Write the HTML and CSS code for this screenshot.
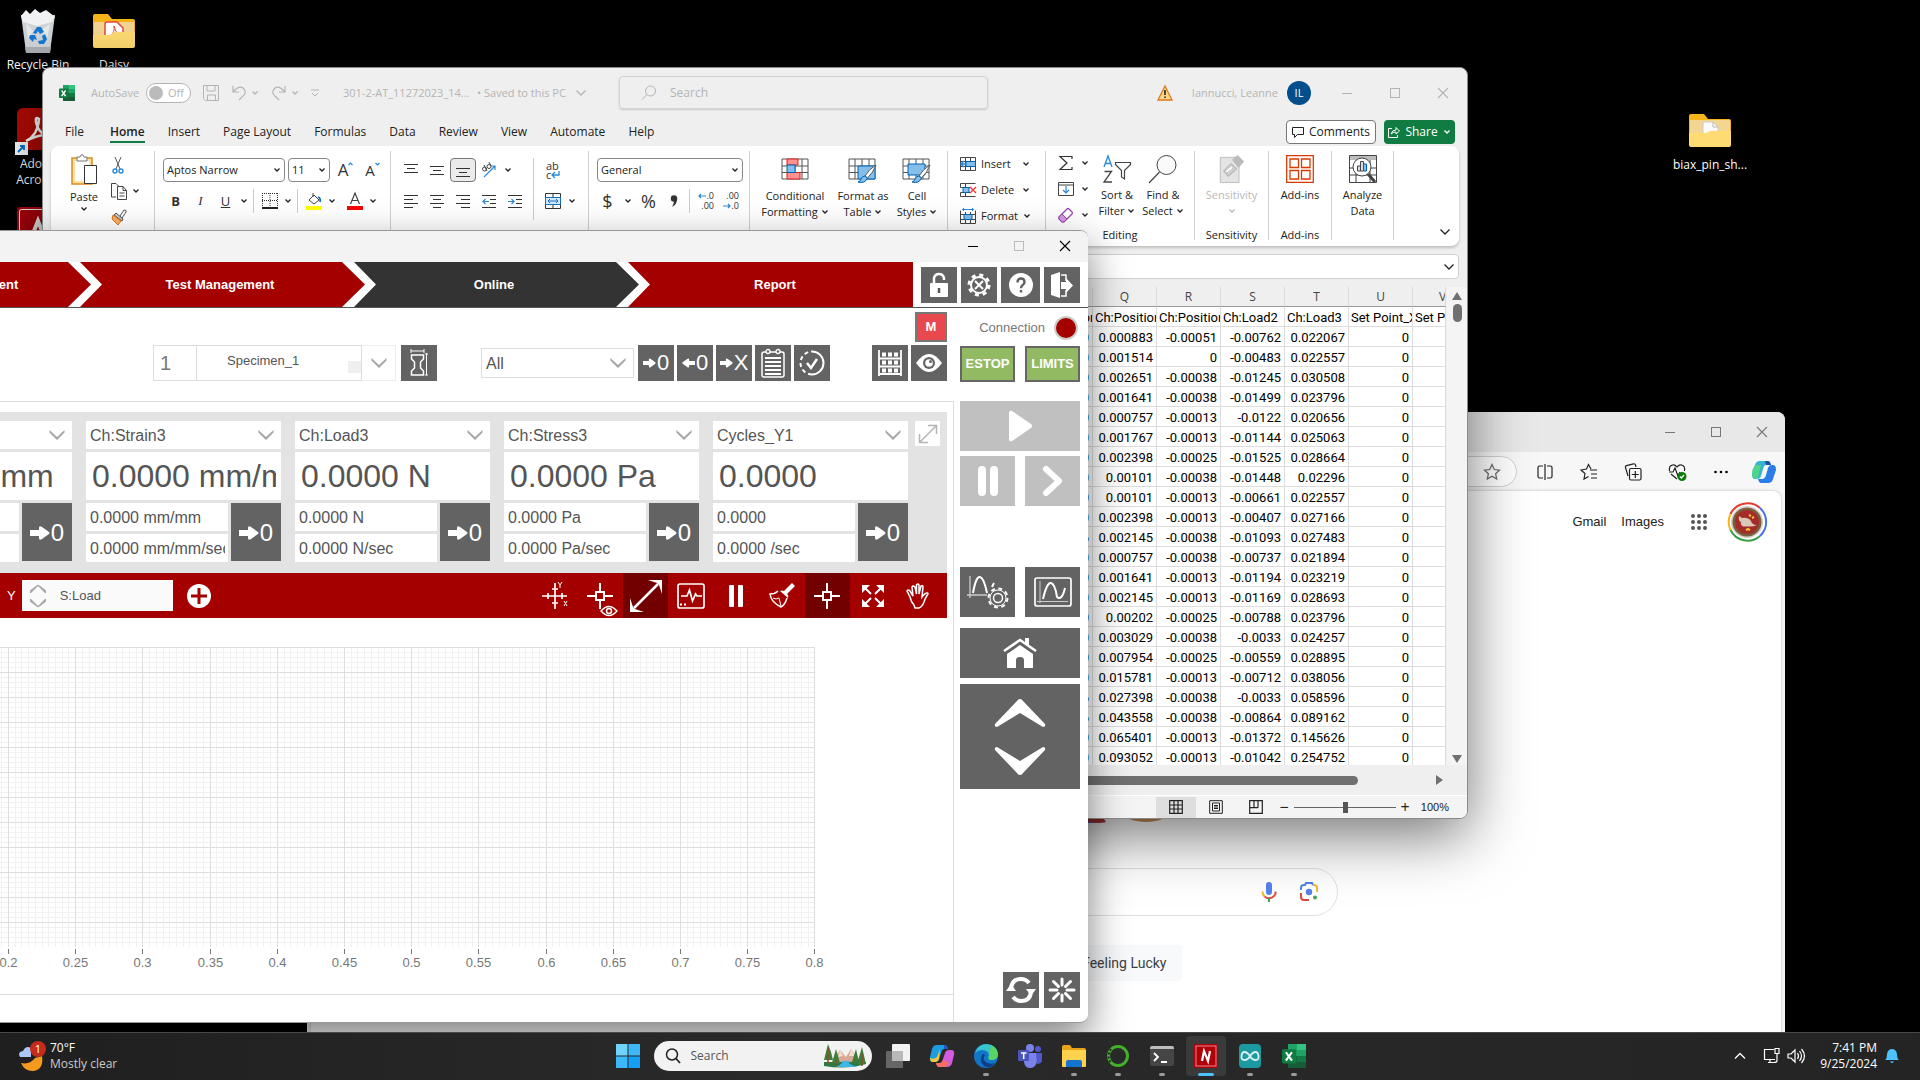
FILE: index.html
```html
<!DOCTYPE html>
<html lang="en">
<head>
<meta charset="utf-8">
<title>Desktop</title>
<link rel="stylesheet" href="styles.css">
</head>
<body>
<svg class="defs" aria-hidden="true">
  <symbol id="chev" viewBox="0 0 8 8"><path d="M1.5 2.5 4 5l2.500-2.500" fill="none" stroke="currentColor" stroke-width="1.300"/></symbol>
  <symbol id="chevL" viewBox="0 0 12 12"><path d="M1.500 3.500 6 8l4.500-4.500" fill="none" stroke="currentColor" stroke-width="1.300"/></symbol>
  <symbol id="drop" viewBox="0 0 16 12"><path d="M.5 1 8 8l7.500-7v2.500L8 11 .5 3.500z" fill="#a6a6a6"/></symbol>
  <symbol id="arr" viewBox="0 0 20 16"><path d="M0 5h9V3q0-3 3-1l7 5q1 1 0 2l-7 5q-3 2-3-1v-2H0z" fill="#fff"/></symbol>
  <symbol id="wmin" viewBox="0 0 12 12"><path d="M1 6.500h10" stroke="currentColor"/></symbol>
  <symbol id="wmax" viewBox="0 0 12 12"><rect x="1.500" y="1.500" width="9" height="9" fill="none" stroke="currentColor"/></symbol>
  <symbol id="wclose" viewBox="0 0 12 12"><path d="m1 1 10 10M11 1 1 11" stroke="currentColor" stroke-width="1.100"/></symbol>
  <symbol id="xl" viewBox="0 0 16 16"><path d="M4 0h6v8H4z" fill="#21a366"/><path d="M10 0h6v4h-6z" fill="#33c481"/><path d="M10 4h6v4h-6z" fill="#21a366"/><path d="M4 8h6v4H4z" fill="#185c37"/><path d="M10 8h6v4h-6z" fill="#107c41"/><path d="M4 12h12v4H4z" fill="#185c37"/><rect y="3.500" width="9.500" height="9.500" rx=".8" fill="#107c41"/><path d="m2.600 5.500 4 5.600M6.600 5.500l-4 5.600" stroke="#fff" stroke-width="1.400"/></symbol>
  <symbol id="cross" viewBox="0 0 28 28"><path d="M14 1v9m0 8v9M1 14h9m8 0h9M10 10h8v8h-8z" fill="none" stroke="#fff" stroke-width="2"/></symbol>
  <symbol id="gridico" viewBox="0 0 28 24"><path d="M1 1h26v20H1zM1 8h26M1 14.500h26M7 1v20M14 1v20M21 1v20" fill="#fff" stroke="#555"/></symbol>
  <symbol id="brush" viewBox="0 0 20 20"><path d="M19 1q-7 4-11 11l2.500 2Q16 9 19 1z" fill="#fff" stroke="#555"/><path d="M8 12q-3 0-4 3t-3 3q7 2 9.500-4z" fill="#83beec" stroke="#0063b1"/></symbol>
</svg>

<main class="desktop">
  <div class="icons">
    <a class="shortcut" href="#bin">
      <svg class="pic" viewBox="0 0 42 44"><path d="m4 6 5 37h24l5-37z" fill="#cfd3d6"/><path d="m4 7 5-6 4 4 5-5 5 4 6-3 4 3 5 4-3 5-15 4L6 13z" fill="#f0f2f3"/><path d="m9 14 7 8-5 9zm24 1-9 6 6 9z" fill="#e6e9eb"/><path d="M8 38h26l-1 6H9z" fill="#a9aeb2"/><path d="m16 24 4-6h4l3 5-4 2-2-3-2 3zm-3 2 5 0 2 5-3-1-1 3-4-4zm15-1 2 5-3 5h-5l-1-3 5-1-1-4z" fill="#1478d4"/></svg>
      <span>Recycle Bin</span></a>
    <a class="shortcut" href="#daisy">
      <svg class="pic" viewBox="0 0 42 44"><path d="M0 7q0-2 2-2h13l4 5h21q2 0 2 2v24H0z" fill="#f7b51c"/><path d="M1 13h40v15H1z" fill="#f3d692"/><path d="M12 30V15q0-2 2-2h10l6 6v11z" fill="#fff" stroke="#e5483f" stroke-width="1.500"/><path d="M18 26q4-3 3-9 1 6 5 8-4-1-8 1z" fill="none" stroke="#e5483f"/><path d="M0 26h17l4-3h21v14q0 2-2 2H2q-2 0-2-2z" fill="#ffdb72"/></svg>
      <span>Daisy</span></a>
    <a class="shortcut" href="#acrobat">
      <svg class="pic" viewBox="0 0 42 44"><rect x="0" y="0" width="42" height="42" rx="6" fill="#b30b00"/><path d="M9 33q12-6 13-22-4-3-3 3 3 14 16 14-12-3-26 5z" fill="none" stroke="#fff" stroke-width="2.500"/><rect x="-2" y="34" width="13" height="13" fill="#fff"/><path d="m1 44 6-6m-4 0h4v4" stroke="#0078d4" stroke-width="1.800" fill="none"/></svg>
      <span>Adobe Acrobat</span></a>
    <a class="shortcut third" href="#autocad">
      <svg class="pic" viewBox="0 0 42 44"><rect width="42" height="42" rx="3" fill="#b3000c"/><rect x="2.500" y="2.500" width="37" height="37" rx="2" fill="none" stroke="#fff"/><path d="m13 34 8-20 8 20" fill="none" stroke="#fff" stroke-width="4"/></svg></a>
  </div>
  <a class="shortcut biax" href="#biax">
    <svg class="pic" viewBox="0 0 42 44"><path d="M0 7q0-2 2-2h13l4 5h21q2 0 2 2v24H0z" fill="#f7b51c"/><path d="M1 11h40v15H1z" fill="#f3d692"/><path d="M14 28V13h10l5 5v10z" fill="#fafafa" stroke="#ccc"/><path d="M24 13v5h5" fill="none" stroke="#bbb"/><path d="M0 24h17l4-2h21v14q0 2-2 2H2q-2 0-2-2z" fill="#ffdb72"/></svg>
    <span>biax_pin_sh...</span></a>

  <!-- Browser window -->
  <section class="win edge" aria-label="Browser">
    <div class="winctl edge-title">
      <button aria-label="Minimize"><svg><use href="#wmin"/></svg></button><button aria-label="Maximize"><svg><use href="#wmax"/></svg></button><button aria-label="Close"><svg><use href="#wclose"/></svg></button>
    </div>
    <div class="edge-bar">
      <div class="address"><svg viewBox="0 0 20 20"><path d="m10 2.500 2.300 5 5.200.600-3.900 3.600 1.100 5.300-4.700-2.700L5.300 17l1.100-5.300L2.500 8.100l5.200-.6z" fill="none" stroke="#666" stroke-width="1.200"/></svg></div>
      <button aria-label="Split screen"><svg viewBox="0 0 20 20"><path d="M8 4H4.500Q3 4 3 5.500v9Q3 16 4.500 16H8M12 4h3.500Q17 4 17 5.500v9q0 1.500-1.500 1.500H12M10 2v16" fill="none" stroke="#222" stroke-width="1.200"/></svg></button>
      <button aria-label="Favorites"><svg viewBox="0 0 20 20"><path d="M12 7 9.500 2.500 7.500 7 2 8l4 3.500L5 17l4.500-2.500M11 8h7m-6 4h6m-6 4h6" fill="none" stroke="#222" stroke-width="1.200"/></svg></button>
      <button aria-label="Collections"><svg viewBox="0 0 20 20"><path d="M5 14 2.500 5.500Q2 4 3.500 3.600l7-1.800Q12 1.500 12.500 3l.5 2M8 6.500h8.500q1.500 0 1.500 1.500v8.500q0 1.500-1.500 1.500H8q-1.500 0-1.500-1.500V8Q6.500 6.500 8 6.500zM12.300 9v7M8.800 12.500h7" fill="none" stroke="#222" stroke-width="1.200"/></svg></button>
      <button aria-label="Performance"><svg viewBox="0 0 20 20"><path d="M2.500 9Q1.500 4 5.500 3 8 2.500 10 5q2-2.500 4.500-2 4 1 3 6M2 10h4l2-4 3 8 2-4M4 12l6 5" fill="none" stroke="#222" stroke-width="1.200"/><circle cx="15" cy="14.500" r="4.500" fill="#0e7a0d"/><path d="m13 14.500 1.500 1.500 2.500-3" fill="none" stroke="#fff" stroke-width="1.200"/></svg></button>
      <button aria-label="More"><svg viewBox="0 0 20 20"><circle cx="4.500" cy="10" r="1.300"/><circle cx="10" cy="10" r="1.300"/><circle cx="15.500" cy="10" r="1.300"/></svg></button>
      <button class="pilot" aria-label="Copilot"><svg class="big" viewBox="0 0 24 24"><path d="M8 1h8q2 0 3 4h-5q-2 0-3 4l-2 7q-1 3-4 3H3Q0 19 0 14L3 5q1-4 5-4z" fill="#35b3cf"/><path d="M0 15q0-8 4-10h5L6 18q-5 2-6-3z" fill="#4fd48c"/><path d="M16 23H9q-2 0-3-4h4q3 0 4-4l2-7q1-3 4-3h1q3 0 3 5l-3 9q-1 4-5 4z" fill="#2a7de8"/><path d="M13 1h3q2 0 3 4h-5z" fill="#1b4fa8"/></svg></button>
    </div>
    <div class="page">
      <nav class="glinks"><a href="#gmail">Gmail</a><a href="#images">Images</a>
        <button class="gapps" aria-label="Apps"><svg width="18" height="18" viewBox="0 0 18 18" fill="#555"><circle cx="3" cy="3" r="2"/><circle cx="9" cy="3" r="2"/><circle cx="15" cy="3" r="2"/><circle cx="3" cy="9" r="2"/><circle cx="9" cy="9" r="2"/><circle cx="15" cy="9" r="2"/><circle cx="3" cy="15" r="2"/><circle cx="9" cy="15" r="2"/><circle cx="15" cy="15" r="2"/></svg></button>
        <button aria-label="Account"><svg width="40" height="40" viewBox="0 0 40 40"><g fill="none" stroke-width="2"><path d="M3.500 12A19 19 0 0 1 33 6" stroke="#e33b2e"/><path d="M33 6a19 19 0 0 1 0 28" stroke="#4a72e8"/><path d="M33 34a19 19 0 0 1-29.500-6" stroke="#34a048"/><path d="M3.500 28a19 19 0 0 1 0-16" stroke="#f7b51c"/></g><circle cx="20" cy="20" r="16" fill="#d7cfc6"/><circle cx="20" cy="20" r="14.500" fill="#77603e"/><circle cx="20" cy="20" r="12" fill="#a42b28"/><path d="m12 14 3 2q6-1 9 3 1 4 6 4-4 2-9 1.500l-5 0q-3-2-2-4.500-3-1-2-6z" fill="#d9c6b4"/><path d="m22 13 2 1m1 2 2-1m-8 13 2-1 2 1" stroke="#f0c93a" stroke-width="2"/></svg></button>
      </nav>
      <svg class="doodle" width="280" height="60" viewBox="0 0 280 60"><ellipse cx="140" cy="30" rx="28" ry="29" fill="#a33"/><path d="M140 40h50v19h-40z" fill="#6a5fc0"/><path d="M170 50q15 12 30 8l-10-14z" fill="#b33"/><ellipse cx="240" cy="36" rx="34" ry="22" fill="#c98a55"/></svg>
      <div class="gsearch">
        <svg width="24" height="24" viewBox="0 0 24 24"><rect x="9" y="2" width="6" height="13" rx="3" fill="#5383ec"/><path d="M5.500 11.500q0 3 2 5" fill="none" stroke="#f2bc2e" stroke-width="2"/><path d="M7.500 16.500q4.500 3.500 9 0l2-2.500v-2.500" fill="none" stroke="#dd4b3e" stroke-width="2"/><path d="M12 18v4" stroke="#48a350" stroke-width="2"/></svg>
        <svg width="24" height="24" viewBox="0 0 24 24" fill="none" stroke-width="2"><path d="M4 10V8q0-3 3-3h1l1-2h6l1 2" stroke="#5383ec"/><path d="M16 5h1q3 0 3 3v4" stroke="#f2bc2e"/><path d="M4 13v4q0 3 3 3h5" stroke="#dd4b3e"/><circle cx="12" cy="12" r="3.200" fill="#5383ec"/><circle cx="18" cy="17.500" r="2" fill="#48a350"/></svg>
      </div>
      <div class="gbtns"><button>Google Search</button><button>I'm Feeling Lucky</button></div>
    </div>
  </section>

  <!-- Spreadsheet window -->
  <section class="win excel" aria-label="Spreadsheet">
    <div class="xl-title">
      <svg class="xl-logo" width="16" height="16"><use href="#xl"/></svg>
      <span class="autosave">AutoSave</span>
      <label class="toggle"><input type="checkbox" aria-label="AutoSave"><i></i>Off</label>
      <button class="qa" aria-label="Save"><svg width="16" height="16" viewBox="0 0 16 16"><path d="M.500.500h15v15h-13l-2-2zM4 .500V6h8V.500M4.500 15.500V10h8v5.500" fill="none" stroke="currentColor"/></svg></button>
      <button class="qa undo" aria-label="Undo"><svg width="16" height="16" viewBox="0 0 16 16"><path d="M2 1v6h6M2 7q6-7 10-4 5 5-1 9l-3 3" fill="none" stroke="currentColor" stroke-width="1.200"/></svg><svg width="8" height="8"><use href="#chev"/></svg></button>
      <button class="qa" aria-label="Redo"><svg width="16" height="16" viewBox="0 0 16 16"><path d="M14 1v6H8M14 7Q8 0 4 3q-5 5 1 9l3 3" fill="none" stroke="currentColor" stroke-width="1.200"/></svg><svg width="8" height="8"><use href="#chev"/></svg></button>
      <button class="qa" aria-label="Customize"><svg width="8" height="8" viewBox="0 0 8 8"><path d="M0 1h8M1 4l3 3 3-3" fill="none" stroke="currentColor"/></svg></button>
      <span class="doc">301-2-AT_11272023_14...</span><span class="saved">• Saved to this PC</span><svg width="12" height="12"><use href="#chevL"/></svg>
      <label class="xl-search"><svg width="16" height="16" viewBox="0 0 16 16"><circle cx="9.500" cy="6" r="5" fill="none" stroke="currentColor"/><path d="m6 9.500-5 5" stroke="currentColor"/></svg><input type="text" placeholder="Search" aria-label="Search"></label>
      <div class="user"><svg width="16" height="16" viewBox="0 0 16 16"><path d="M8 1 15 15H1z" fill="#ffd88a" stroke="#dd7a1a" stroke-width="1.300"/><path d="M8 5v5m0 1.500V13" stroke="#222" stroke-width="1.600"/></svg><span>Iannucci, Leanne</span><b>IL</b></div>
      <div class="winctl"><button aria-label="Minimize"><svg><use href="#wmin"/></svg></button><button aria-label="Maximize"><svg><use href="#wmax"/></svg></button><button aria-label="Close"><svg><use href="#wclose"/></svg></button></div>
    </div>
    <nav class="tabs">
      <a href="#file">File</a><a class="on" href="#home">Home</a><a href="#insert">Insert</a><a href="#layout">Page Layout</a><a href="#formulas">Formulas</a><a href="#data">Data</a><a href="#review">Review</a><a href="#view">View</a><a href="#automate">Automate</a><a href="#help">Help</a>
      <button class="comments"><svg width="12" height="12" viewBox="0 0 12 12"><path d="M.500 1.500h11v7h-6l-3 3v-3h-2z" fill="none" stroke="#222"/></svg>Comments</button>
      <button class="share"><svg width="12" height="12" viewBox="0 0 12 12"><path d="M4 2.500H.500v9h9V9M3 8q1-4 5-4V1.500L11.500 5 8 8V6Q5 6 3 8z" fill="none" stroke="#fff"/></svg>Share<svg width="8" height="8"><use href="#chev"/></svg></button>
    </nav>
    <div class="ribbon">
      <div class="grp g-clip">
        <button class="big-btn paste"><svg width="28" height="32" viewBox="0 0 28 32"><path d="M2 5h20v26H2z" fill="#ffe0a0" stroke="#e08a1e" stroke-width="1.500"/><path d="M5 8h14v20H5z" fill="#fff"/><path d="M7 8V4h3q2-5 4 0h3v4z" fill="#fff" stroke="#777"/><path d="M14.500 12.500h12v18h-12z" fill="#fff" stroke="#333"/></svg>Paste<svg width="8" height="8"><use href="#chev"/></svg></button>
        <div class="stack">
          <button aria-label="Cut"><svg width="14" height="18" viewBox="0 0 14 18"><path d="m4 1 5 12M10 1 5 13" stroke="#555"/><circle cx="4" cy="15" r="2" fill="none" stroke="#2b88d8" stroke-width="1.400"/><circle cx="10" cy="15" r="2" fill="none" stroke="#2b88d8" stroke-width="1.400"/></svg></button>
          <button aria-label="Copy"><svg width="16" height="18" viewBox="0 0 16 18"><path d="M5 15H.500V1.500H5l3 3M6.500 4.500H12l3.500 4v9h-9z M12 4.500v4h3.500M8.500 11h5m-5 3h5" fill="none" stroke="#444"/></svg><svg class="side-chev" width="8" height="8"><use href="#chev"/></svg></button>
          <button aria-label="Format Painter"><svg width="16" height="16" viewBox="0 0 16 16"><path d="m9 7 4-6q3 0 2 2l-4 6z" fill="#fff" stroke="#555"/><path d="m5 4 7 6-1 2-8-6z" fill="#ccc" stroke="#555"/><path d="m2 6 8 6-3 4-6-6z" fill="#f7b267" stroke="#d9730d"/></svg></button>
        </div>
      </div>
      <div class="grp g-font">
        <div class="row"><span class="pick font-name"><select aria-label="Font"><option>Aptos Narrow</option></select><svg width="8" height="8"><use href="#chev"/></svg></span><span class="pick font-size"><select aria-label="Font size"><option>11</option></select><svg width="8" height="8"><use href="#chev"/></svg></span>
          <button class="t a-up">A<svg width="5" height="4" viewBox="0 0 5 4"><path d="m.500 3 2-2 2 2" fill="none" stroke="#2b88d8" stroke-width="1.200"/></svg></button><button class="t a-dn">A<svg width="5" height="4" viewBox="0 0 5 4"><path d="m.500 1 2 2 2-2" fill="none" stroke="#2b88d8" stroke-width="1.200"/></svg></button></div>
        <div class="row"><button class="t"><b>B</b></button><button class="t it">I</button><button class="t"><u>U</u></button><button class="c" aria-label="Underline options"><svg><use href="#chev"/></svg></button><i class="vr"></i>
          <button class="t" aria-label="Borders"><svg width="16" height="16" viewBox="0 0 16 16"><path d="M.500 0v14M15.500 0v14M8 0v14M0 .500h16M0 7.500h16" stroke="#333" stroke-dasharray="1 1"/><path d="M0 15h16" stroke="#222" stroke-width="2"/></svg></button><button class="c" aria-label="Border options"><svg><use href="#chev"/></svg></button><i class="vr"></i>
          <button class="t" aria-label="Fill color"><svg width="16" height="18" viewBox="0 0 16 18"><path d="m3 8 5-5 5 5-5 4zM7 1v4" fill="#fff" stroke="#444"/><path d="M12 5q3 1 2 5" stroke="#1a6fc0" stroke-width="1.800" fill="none"/><path d="M0 14h16v4H0z" fill="#ff0"/></svg></button><button class="c" aria-label="Fill options"><svg><use href="#chev"/></svg></button>
          <button class="t gap4" aria-label="Font color"><svg width="16" height="18" viewBox="0 0 16 18"><path d="m3.500 12 4.500-11 4.500 11M5 8.500h6" stroke="#444" stroke-width="1.200" fill="none"/><path d="M0 14h16v4H0z" fill="#f00"/></svg></button><button class="c" aria-label="Font color options"><svg><use href="#chev"/></svg></button></div>
      </div>
      <div class="grp g-align">
        <div class="cols"><div>
          <div class="row"><button class="t" aria-label="Top align"><svg width="14" height="14" viewBox="0 0 14 14"><path d="M0 1.500h14M3 5.500h8M0 9.500h14" stroke="#333"/></svg></button><button class="t" aria-label="Middle align"><svg width="14" height="14" viewBox="0 0 14 14"><path d="M0 3.500h14M3 7.500h8M0 11.500h14" stroke="#333"/></svg></button><button class="t boxed" aria-label="Bottom align"><svg width="14" height="14" viewBox="0 0 14 14"><path d="M0 5.500h14M3 9.500h8M0 13.500h14" stroke="#333"/></svg></button><button class="t" aria-label="Orientation"><svg width="16" height="16" viewBox="0 0 16 16"><path d="M3 15 14 4m-4 0h4v4" fill="none" stroke="#2b88d8" stroke-width="1.200"/><circle cx="3.500" cy="7" r="2" fill="none" stroke="#444"/><circle cx="8" cy="4.500" r="2" fill="none" stroke="#444"/><path d="m6 9-3-6m7 1L8 0" stroke="#444"/></svg></button><button class="c" aria-label="Orientation options"><svg><use href="#chev"/></svg></button></div>
          <div class="row"><button class="t" aria-label="Align left"><svg width="14" height="14" viewBox="0 0 14 14"><path d="M0 1.500h14M0 5.500h9M0 9.500h14M0 13.500h9" stroke="#333"/></svg></button><button class="t" aria-label="Center"><svg width="14" height="14" viewBox="0 0 14 14"><path d="M0 1.500h14M3 5.500h8M0 9.500h14M3 13.500h8" stroke="#333"/></svg></button><button class="t" aria-label="Align right"><svg width="14" height="14" viewBox="0 0 14 14"><path d="M0 1.500h14M5 5.500h9M0 9.500h14M5 13.500h9" stroke="#333"/></svg></button><button class="t" aria-label="Decrease indent"><svg width="14" height="14" viewBox="0 0 14 14"><path d="M0 1.500h14M8 5.500h6M8 9.500h6M0 13.500h14" stroke="#333"/><path d="M7 7.500H1m2.500-2.500L1 7.500 3.500 10" fill="none" stroke="#2b88d8" stroke-width="1.200"/></svg></button><button class="t" aria-label="Increase indent"><svg width="14" height="14" viewBox="0 0 14 14"><path d="M0 1.500h14M8 5.500h6M8 9.500h6M0 13.500h14" stroke="#333"/><path d="M0 7.500h6M3.500 5 6 7.500 3.500 10" fill="none" stroke="#2b88d8" stroke-width="1.200"/></svg></button></div>
        </div><i class="vr tall"></i><div>
          <div class="row"><button class="t wrap">ab<br>c<svg width="9" height="8" viewBox="0 0 9 8"><path d="M8 0v4H1m3-3L1 4l3 3" fill="none" stroke="#2b88d8" stroke-width="1.300"/></svg></button></div>
          <div class="row"><button class="t" aria-label="Merge"><svg width="16" height="16" viewBox="0 0 16 16"><path d="M.500.500h15v15H.500zM8 .500v4m0 7v4" fill="none" stroke="#333"/><path d="M.500 4.500h15v7H.500z" fill="#d4e9fa" stroke="#1a6fc0"/><path d="M3 8h10M5 6 3 8l2 2m6-4 2 2-2 2" fill="none" stroke="#1a6fc0"/></svg></button><button class="c" aria-label="Merge options"><svg><use href="#chev"/></svg></button></div>
        </div></div>
      </div>
      <div class="grp g-num">
        <div class="row"><span class="pick num-fmt"><select aria-label="Number format"><option>General</option></select><svg width="8" height="8"><use href="#chev"/></svg></span></div>
        <div class="row"><button class="t sym">$</button><button class="c gapc" aria-label="Currency options"><svg><use href="#chev"/></svg></button><button class="t sym">%</button><button class="t" aria-label="Comma style"><svg width="10" height="14" viewBox="0 0 10 14"><circle cx="5" cy="4.500" r="3.200" fill="#333"/><path d="M8.200 4.500q0 6-5.200 8.500 2-3 2-6z" fill="#333"/></svg></button><i class="vr"></i>
          <button class="t dec"><span><svg width="8" height="6" viewBox="0 0 8 6"><path d="M8 3H1m2-2L1 3l2 2" fill="none" stroke="#2b88d8" stroke-width="1.200"/></svg>.0</span><span>.00</span></button><button class="t dec"><span>.00</span><span><svg width="8" height="6" viewBox="0 0 8 6"><path d="M0 3h7M5 1l2 2-2 2" fill="none" stroke="#2b88d8" stroke-width="1.200"/></svg>.0</span></button></div>
      </div>
      <div class="grp g-styles">
        <button class="big-btn w76"><svg width="28" height="28" viewBox="0 0 28 28"><use href="#gridico" width="28" height="24" y="2"/><path d="M6 3h11v6H6zM6 16.500h13V23H6z" fill="#ff9090" stroke="#d8231c"/><path d="M6 9h8v7.500H6z" fill="#83beec" stroke="#0063b1"/></svg>Conditional<span>Formatting <svg width="8" height="8"><use href="#chev"/></svg></span></button>
        <button class="big-btn w60"><svg width="30" height="28" viewBox="0 0 30 28"><use href="#gridico" width="28" height="24" y="2"/><path d="M10 10h17v13H10z" fill="#83beec" stroke="#0063b1"/><use href="#brush" x="8" y="8" width="22" height="20"/></svg>Format as<span>Table <svg width="8" height="8"><use href="#chev"/></svg></span></button>
        <button class="big-btn w48"><svg width="30" height="28" viewBox="0 0 30 28"><use href="#gridico" width="28" height="24" y="2"/><path d="M6 8h17v11H6z" fill="#83beec" stroke="#0063b1"/><use href="#brush" x="8" y="8" width="22" height="20"/></svg>Cell<span>Styles <svg width="8" height="8"><use href="#chev"/></svg></span></button>
      </div>
      <div class="grp g-cells">
        <button class="line"><svg width="16" height="14" viewBox="0 0 16 14"><path d="M.500.500h15v13H.500zM.500 4.500h15m-15 5h15M5.500.500v13m5-13v13" fill="none" stroke="#444"/><path d="M6 4.500h9.500v5H6z" fill="#83beec" stroke="#0063b1"/><path d="M6 7H1m3-3L1 7l3 3" fill="none" stroke="#2b88d8" stroke-width="1.500"/></svg><span>Insert</span><svg width="8" height="8"><use href="#chev"/></svg></button>
        <button class="line"><svg width="16" height="14" viewBox="0 0 16 14"><path d="M.500.500h15M.500 13.500h15M.500 4.500h10m-10 5h10M5.500.500v13m-5-13v4m0 5v4" fill="none" stroke="#444"/><path d="M3 4.500h6v5H3z" fill="#83beec" stroke="#0063b1"/><path d="m10 4 6 6m0-6-6 6" stroke="#e33" stroke-width="1.300"/></svg><span>Delete</span><svg width="8" height="8"><use href="#chev"/></svg></button>
        <button class="line"><svg width="16" height="16" viewBox="0 0 16 16"><path d="M.500 2.500v13h15v-13M.500 6.500h15m-15 5h15M5.500 4v11m5-11v11" fill="none" stroke="#444"/><path d="M4 6.500h8v5H4z" fill="#83beec" stroke="#0063b1"/><path d="M2 1.500h12M3.500 0v3m9-3v3" stroke="#2b88d8"/></svg><span>Format</span><svg width="8" height="8"><use href="#chev"/></svg></button>
      </div>
      <div class="grp g-edit">
        <div class="acts"><div class="stack">
          <button aria-label="Sum"><svg width="16" height="16" viewBox="0 0 16 16"><path d="M14 4V1.500H2L9 8l-7 6.500h12V12" fill="none" stroke="#333" stroke-width="1.200"/></svg><svg class="side-chev" width="8" height="8"><use href="#chev"/></svg></button>
          <button aria-label="Fill"><svg width="16" height="14" viewBox="0 0 16 14"><path d="M.500.500h15v13H.500zM.500 3h15" fill="none" stroke="#444"/><path d="M8 4v7M5 8l3 3 3-3" fill="none" stroke="#2b88d8" stroke-width="1.200"/></svg><svg class="side-chev" width="8" height="8"><use href="#chev"/></svg></button>
          <button aria-label="Clear"><svg width="16" height="16" viewBox="0 0 16 16"><path d="m1 10 8-8q1-1 2 0l3 3q1 1 0 2l-8 8H4l-3-3z" fill="#fff" stroke="#9b3fb0" stroke-width="1.200"/><path d="m1 10 3-3 5 5-3 3H4l-3-3z" fill="#d09adf" stroke="#9b3fb0"/></svg><svg class="side-chev" width="8" height="8"><use href="#chev"/></svg></button>
        </div>
        <button class="big-btn w46"><svg width="28" height="28" viewBox="0 0 28 28"><path d="m1 12 4-11 4 11M2.500 8.500h5" fill="none" stroke="#2b88d8" stroke-width="1.300"/><path d="M1.500 16.500h7L1 27h8" fill="none" stroke="#444" stroke-width="1.300"/><path d="M12.500 7.500h15v2l-6 6V24l-3-2v-6.500l-6-6z" fill="none" stroke="#444" stroke-width="1.200"/></svg>Sort &amp;<span>Filter <svg width="8" height="8"><use href="#chev"/></svg></span></button>
        <button class="big-btn w46"><svg width="30" height="28" viewBox="0 0 30 28"><circle cx="18.500" cy="10" r="9.500" fill="#fafafa" stroke="#444"/><path d="M11.500 17 1 28" stroke="#444" stroke-width="1.200"/></svg>Find &amp;<span>Select <svg width="8" height="8"><use href="#chev"/></svg></span></button></div>
        <p>Editing</p>
      </div>
      <div class="grp g-one w74">
        <button class="big-btn off"><svg width="28" height="28" viewBox="0 0 28 30"><path d="M1.500 2.500h20v27h-20z" fill="#e4e4e4" stroke="#bbb"/><path d="m5 17 8-8 6 6-9 8z" fill="#ccc" stroke="#aaa"/><path d="m14 5 6-5 7 7-6 7z" fill="#bbb"/><path d="m8 18 6-5" stroke="#fff" stroke-width="2"/></svg>Sensitivity<span class="only"><svg width="8" height="8"><use href="#chev"/></svg></span></button><p>Sensitivity</p></div>
      <div class="grp g-one w63">
        <button class="big-btn"><svg width="28" height="28" viewBox="0 0 28 28"><path d="M.700.700h26.600v26.600H.700zM4 4h8.500v8.500H4zm11.500 0H24v8.500h-8.500zM4 15.500h8.500V24H4zm11.500 0H24V24h-8.500z" fill="#fff" stroke="#d83b01" stroke-width="1.300"/></svg>Add-ins</button><p>Add-ins</p></div>
      <div class="grp g-one w62">
        <button class="big-btn"><svg width="28" height="28" viewBox="0 0 28 28"><path d="M.500.500h27v27H.500zM.500 13h27m-27 7h27M7 4v23m14-23v23" fill="#fff" stroke="#444"/><path d="M1 1h26v4H1z" fill="#bbb"/><path d="m19 19 7 8" stroke="#444" stroke-width="3"/><circle cx="13" cy="12" r="9" fill="#fff" stroke="#444"/><path d="M8.500 11h3v5h-3zM11.500 6.500h3V16h-3z" fill="#ddd" stroke="#444"/><path d="M14.500 9h3v7h-3z" fill="#83beec" stroke="#0063b1"/></svg>Analyze<span>Data</span></button></div>
      <button class="collapse" aria-label="Ribbon options"><svg width="12" height="12"><use href="#chevL"/></svg></button>
    </div>
    <div class="formula"><svg width="12" height="12"><use href="#chevL"/></svg></div>
    <div class="sheet">
      <table>
        <thead><tr><th>P</th><th>Q</th><th>R</th><th>S</th><th>T</th><th>U</th><th class="last">V</th></tr></thead>
        <tbody id="cells"></tbody>
      </table>
      <div class="vscroll"><i class="up"></i><i class="thumb"></i><i class="down"></i></div>
    </div>
    <div class="hscroll"><i class="bar"></i><i class="right"></i></div>
    <div class="status">
      <button class="on" aria-label="Normal view"><svg width="14" height="14" viewBox="0 0 14 14"><path d="M.700.700h12.600v12.600H.700zM.700 5h12.600M.700 9h12.600M5 .700v12.600M9 .700v12.600" fill="none" stroke="#222" stroke-width="1.200"/></svg></button>
      <button aria-label="Page layout view"><svg width="14" height="14" viewBox="0 0 14 14"><path d="M.700.700h12.600v12.600H.700zM3.500 3h7v8h-7zM5 5.500h4M5 7h4M5 8.500h4" fill="none" stroke="#222"/></svg></button>
      <button aria-label="Page break view"><svg width="14" height="14" viewBox="0 0 14 14"><path d="M.700.700h12.600v12.600H.700zM5 .700v7M9 .700v7M.700 7.700H9" fill="none" stroke="#222" stroke-width="1.200"/></svg></button>
      <span class="pm">−</span><input type="range" min="0" max="100" value="50" aria-label="Zoom"><span class="pm">+</span><span class="pct">100%</span>
    </div>
  </section>

  <!-- Test instrument window -->
  <section class="win app" aria-label="Test control">
    <div class="winctl app-title"><button aria-label="Minimize"><svg><use href="#wmin"/></svg></button><button class="dis" aria-label="Maximize"><svg><use href="#wmax"/></svg></button><button aria-label="Close"><svg><use href="#wclose"/></svg></button></div>
    <nav class="steps">
      <a class="first" href="#specimen">Specimen Management</a><a href="#test">Test Management</a><a class="now" href="#online">Online</a><a class="end" href="#report">Report</a>
      <div class="sys">
        <button class="dk" aria-label="Lock"><svg width="20" height="26" viewBox="0 0 20 26"><path d="M5 12V6q1-4 5-4t5 4v2" fill="none" stroke="#fff" stroke-width="2.500"/><rect x="1" y="11" width="18" height="14" rx="1" fill="#fff"/><path d="M10 16v5" stroke="#555" stroke-width="2.500"/></svg></button>
        <button class="dk" aria-label="Settings"><svg width="24" height="24" viewBox="0 0 24 24"><circle cx="12" cy="12" r="10" fill="none" stroke="#fff" stroke-width="3" stroke-dasharray="4 3.850"/><circle cx="12" cy="12" r="8" fill="none" stroke="#fff" stroke-width="2"/><path d="m8 8 8 8m0-8-8 8" stroke="#fff" stroke-width="2"/></svg></button>
        <button class="dk wide" aria-label="Help"><svg width="24" height="24" viewBox="0 0 24 24"><circle cx="12" cy="12" r="12" fill="#fff"/><path d="M8.500 9.500q0-4 3.500-4t3.500 3.500q0 2-2 3.200-1.500 1-1.500 3M12 17v2.500" fill="none" stroke="#606060" stroke-width="2.400"/></svg></button>
        <button class="dk" aria-label="Exit"><svg width="22" height="26" viewBox="0 0 22 26"><path d="m0 3 9-3v26l-9-3z" fill="#fff"/><path d="M10 3h5v6m0 9v6h-5" fill="none" stroke="#fff" stroke-width="1.500"/><path d="M10 10h5V6l7 7.500-7 7.500v-4h-5z" fill="#fff"/></svg></button>
      </div>
    </nav>
    <div class="app-body">
      <div class="work">
        <div class="tools">
          <button class="mbtn">M</button>
          <div class="ctl">
            <div class="spec"><input class="num" type="text" value="1" aria-label="Specimen number"><input class="name" type="text" value="Specimen_1" aria-label="Specimen name"><button aria-label="Choose specimen"><svg width="16" height="12"><use href="#drop"/></svg></button></div>
            <button class="dk" aria-label="Specimen dimensions"><svg width="18" height="28" viewBox="0 0 18 28"><path d="M1.500 6v4l3 3v6l-3 3v4h12v-4l-3-3v-6l3-3V6z" fill="none" stroke="#fff" stroke-width="1.500"/><path d="M1 2h13M1 0v4m13-4v4M16.500 4v22M15 5h3m-3 21h3" stroke="#fff"/></svg></button>
            <span class="combo all"><select aria-label="Channel filter"><option>All</option></select><svg width="16" height="12"><use href="#drop"/></svg></span>
            <div class="set">
              <button class="dk z"><svg width="13" height="12"><use href="#arr"/></svg>0</button>
              <button class="dk z"><svg class="flip" width="13" height="12"><use href="#arr"/></svg>0</button>
              <button class="dk z"><svg width="13" height="12"><use href="#arr"/></svg>X</button>
              <button class="dk" aria-label="Log"><svg width="24" height="30" viewBox="0 0 24 30"><rect x="1" y="4" width="22" height="25" rx="2" fill="none" stroke="#fff" stroke-width="1.500"/><path d="M4 10h16M4 14h16M4 18h16M4 22h16M4 26h16" stroke="#fff" stroke-width="1.800"/><circle cx="7" cy="3.500" r="2" fill="#636363" stroke="#fff" stroke-width="1.300"/><circle cx="17" cy="3.500" r="2" fill="#636363" stroke="#fff" stroke-width="1.300"/></svg></button>
              <button class="dk" aria-label="Validate"><svg width="26" height="26" viewBox="0 0 26 26"><path d="M13 1.500a11.500 11.500 0 0 1 0 23" fill="none" stroke="#fff" stroke-width="2"/><path d="M13 24.500a11.500 11.500 0 0 1 0-23" fill="none" stroke="#fff" stroke-width="2" stroke-dasharray="4 3"/><path d="m8 13 4 5 6-9" fill="none" stroke="#fff" stroke-width="2.500"/></svg></button>
            </div>
            <div class="set second">
              <button class="dk" aria-label="Rack"><svg width="26" height="26" viewBox="0 0 26 26"><path d="M2 0v26M24 0v26M2 8.500h22M2 16.500h22M2 24h22" stroke="#fff" stroke-width="1.800"/><path d="M5 4.500h16M5 12.500h16M5 20.500h16" stroke="#fff" stroke-width="4" stroke-dasharray="4 2"/></svg></button>
              <button class="dk" aria-label="View"><svg width="26" height="18" viewBox="0 0 26 18"><path d="M0 9q13-18 26 0-13 18-26 0z" fill="#fff"/><circle cx="13" cy="9" r="6" fill="#636363"/><circle cx="13" cy="9" r="3.800" fill="#fff"/><circle cx="14.500" cy="7.500" r="1.500" fill="#636363"/></svg></button>
            </div>
          </div>
        </div>
        <div class="stage">
          <div class="panel">
            <div class="read"><span class="combo"><select aria-label="Channel 1"><option>Ch:Position3</option></select><svg width="16" height="12"><use href="#drop"/></svg></span><output class="bigv">-0.0000 mm</output><div class="low"><output>0.0000 mm</output><button class="dk z"><svg width="20" height="16"><use href="#arr"/></svg>0</button><output>0.0000 mm/sec</output></div></div>
            <div class="read"><span class="combo"><select aria-label="Channel 2"><option>Ch:Strain3</option></select><svg width="16" height="12"><use href="#drop"/></svg></span><output class="bigv">0.0000 mm/mm</output><div class="low"><output>0.0000 mm/mm</output><button class="dk z"><svg width="20" height="16"><use href="#arr"/></svg>0</button><output>0.0000 mm/mm/sec</output></div></div>
            <div class="read"><span class="combo"><select aria-label="Channel 3"><option>Ch:Load3</option></select><svg width="16" height="12"><use href="#drop"/></svg></span><output class="bigv">0.0000 N</output><div class="low"><output>0.0000 N</output><button class="dk z"><svg width="20" height="16"><use href="#arr"/></svg>0</button><output>0.0000 N/sec</output></div></div>
            <div class="read"><span class="combo"><select aria-label="Channel 4"><option>Ch:Stress3</option></select><svg width="16" height="12"><use href="#drop"/></svg></span><output class="bigv">0.0000 Pa</output><div class="low"><output>0.0000 Pa</output><button class="dk z"><svg width="20" height="16"><use href="#arr"/></svg>0</button><output>0.0000 Pa/sec</output></div></div>
            <div class="read"><span class="combo"><select aria-label="Channel 5"><option>Cycles_Y1</option></select><svg width="16" height="12"><use href="#drop"/></svg></span><output class="bigv">0.0000</output><div class="low"><output>0.0000</output><button class="dk z"><svg width="20" height="16"><use href="#arr"/></svg>0</button><output>0.0000 /sec</output></div></div>
            <button class="expand" aria-label="Expand"><svg width="20" height="20" viewBox="0 0 20 20"><path d="m2 18 16-16M10 1.500h8.500V10M1.500 10v8.500H10" fill="none" stroke="#b5b5b5" stroke-width="1.500"/></svg></button>
          </div>
          <div class="redbar">
            <label for="ych">Y</label>
            <div class="spin"><svg width="16" height="22" viewBox="0 0 16 22"><path d="m.500 8 7.500-7.500L15.500 8V5.500L8 0 .500 5.500zM.500 14 8 21.500l7.500-7.500v2.500L8 22 .500 16.500z" fill="#a6a6a6" stroke="#a6a6a6"/></svg><input id="ych" type="text" value="S:Load"></div>
            <button class="plus" aria-label="Add"><svg width="24" height="24" viewBox="0 0 24 24"><circle cx="12" cy="12" r="12" fill="#fff"/><path d="M12 4v16M4 12h16" stroke="#a50000" stroke-width="3"/></svg></button>
            <div class="gtools">
              <button aria-label="Axes"><svg width="28" height="28" viewBox="0 0 28 28"><path d="M14 1v26M1 14h25M11 7h6M11 21h6M7 11v6M21 11v6" stroke="#fff" stroke-width="1.700"/><path d="m17 0 2 3 2-3m-2 3v3M23 19l3 5m0-5-3 5" stroke="#fff" fill="none"/></svg></button>
              <button aria-label="Cursor view"><svg width="28" height="28" viewBox="0 0 28 28"><use href="#cross" width="28" height="28"/><path d="M15 29q8-9 16 0-8 9-16 0z" fill="#a50000" stroke="#fff" stroke-width="1.300"/><circle cx="23" cy="29" r="2.500" fill="none" stroke="#fff" stroke-width="1.500"/></svg></button>
              <button class="sel" aria-label="Scale"><svg width="34" height="34" viewBox="0 0 34 34"><path d="M5 29 29 5" stroke="#fff" stroke-width="2.500"/><path d="M19 1h14v14l-3-9-2-2zM1 19v14h14l-9-3-2-2z" fill="#fff"/></svg></button>
              <button aria-label="Monitor"><svg width="28" height="26" viewBox="0 0 28 26"><rect x="1" y="1" width="26" height="24" rx="2" fill="none" stroke="#fff" stroke-width="1.700"/><path d="M4 13h6l2.500-6 3 11 3-7 1.500 2h5" fill="none" stroke="#fff" stroke-width="1.700"/><path d="M3 21.500h2m2 0h2" stroke="#fff" stroke-width="2"/></svg></button>
              <button aria-label="Pause graph"><svg width="14" height="22" viewBox="0 0 14 22"><rect x="0" width="5" height="22" rx="1" fill="#fff"/><rect x="9" width="5" height="22" rx="1" fill="#fff"/></svg></button>
              <button aria-label="Clear graph"><svg width="26" height="26" viewBox="0 0 26 26"><path d="m15 8 8-8 3 3-8 8q2 1 1 4l-8-7q2-1 4 0z" fill="#fff"/><path d="M9 8q-3 3-8 3 1 8 11 13 4-2 6-9" fill="none" stroke="#fff" stroke-width="1.500"/><path d="M4 15q3 2 6 0l2 8" fill="none" stroke="#fff"/></svg></button>
              <button class="sel" aria-label="Crosshair"><svg width="28" height="28"><use href="#cross"/></svg></button>
              <button aria-label="Fit"><svg width="22" height="22" viewBox="0 0 22 22"><path d="m2 2 7 7m4 4 7 7m0-18-7 7m-4 4-7 7" stroke="#fff" stroke-width="2"/><path d="M0 0h8L0 8zM22 0h-8l8 8zM0 22h8l-8-8zM22 22h-8l8-8z" fill="#fff"/></svg></button>
              <button aria-label="Pan"><svg width="24" height="26" viewBox="0 0 24 26"><path d="M8 22q-3-3-4-8L1 8q1-2 3 0l3 5L6 4q1-2 3 0l1.500 7V2q1.500-2 2.500 0v9l2-8q2-1 2 1l-1 10q3-4 5-4 2 0 0 2.500-2 3-3 6.500-2 5-5 6H9z" fill="none" stroke="#fff" stroke-width="1.500"/></svg></button>
            </div>
          </div>
          <div class="chart"><svg id="chart" width="1030" height="345"></svg></div>
        </div>
      </div>
      <aside class="side">
        <div class="conn"><span>Connection</span><i></i></div>
        <div class="pair flags"><button>ESTOP</button><button>LIMITS</button></div>
        <button class="lt play" aria-label="Start"><svg width="24" height="32" viewBox="0 0 24 32"><path d="M1 3q0-3 3-2l19 13q2 2 0 4L4 31q-3 1-3-2z" fill="#fff"/></svg></button>
        <div class="pair p1"><button class="lt" aria-label="Pause"><svg width="20" height="30" viewBox="0 0 20 30"><rect width="8" height="30" rx="4" fill="#fff"/><rect x="12" width="8" height="30" rx="4" fill="#fff"/></svg></button><button class="lt" aria-label="Next"><svg width="20" height="30" viewBox="0 0 20 30"><path d="m3 3 13 12L3 27" fill="none" stroke="#fff" stroke-width="6" stroke-linecap="round" stroke-linejoin="round"/></svg></button></div>
        <div class="pair p2"><button class="dk" aria-label="Graph settings"><svg width="42" height="34" viewBox="0 0 42 34"><path d="M3 1v22M0 20h20" stroke="#ccc" stroke-width="1.300"/><path d="M6 18Q9 1 13 2t7 16M25 12l2-4" fill="none" stroke="#fff" stroke-width="2"/><circle cx="31" cy="23" r="9.500" fill="none" stroke="#fff" stroke-width="2" stroke-dasharray="4 3.460"/><circle cx="31" cy="23" r="8" fill="none" stroke="#fff"/><circle cx="31" cy="23" r="4.500" fill="none" stroke="#fff" stroke-width="1.500"/></svg></button><button class="dk" aria-label="Graph"><svg width="38" height="30" viewBox="0 0 38 30"><rect x="1" y="1" width="36" height="28" rx="2" fill="none" stroke="#fff" stroke-width="1.700"/><path d="M6 4v22M3 24.500h31" stroke="#ccc"/><path d="M9 22Q13 5 17 6t6 14q5 4 8-9" fill="none" stroke="#fff" stroke-width="2"/></svg></button></div>
        <button class="dk home" aria-label="Home"><svg width="34" height="30" viewBox="0 0 34 30"><path d="M1 13 17 2l16 11" fill="none" stroke="#fff" stroke-width="2.500"/><path d="M22 0h4v8l-4-3zM4 16l13-9 13 9v14h-9v-8q0-3-4-3t-4 3v8H4z" fill="#fff"/></svg></button>
        <button class="dk jog" aria-label="Jog"><svg width="52" height="76" viewBox="0 0 52 76"><path d="M26 0q2 0 3 2l22 23q1 3-2 3L26 14 3 28q-3 0-2-3L23 2q1-2 3-2zM26 76q2 0 3-2l22-23q1-3-2-3L26 62 3 48q-3 0-2 3l22 23q1 2 3 2z" fill="#fff"/></svg></button>
        <div class="pair last"><button class="dk" aria-label="Refresh"><svg width="30" height="28" viewBox="0 0 30 28"><path d="M5 14Q5 3 15 3q5 0 8 4M25 14q0 11-10 11-5 0-8-4" fill="none" stroke="#fff" stroke-width="4"/><path d="M0 15h10L5 8zM20 13h10l-5 7z" fill="#fff"/></svg></button><button class="dk" aria-label="Busy"><svg width="26" height="24" viewBox="0 0 26 24"><path d="M13 1v6m0 10v6M1 12h7m10 0h7M4.500 3.500l5 5m7 7 5 5m0-17-5 5m-7 7-5 5" stroke="#fff" stroke-width="3" stroke-linecap="round"/></svg></button></div>
      </aside>
    </div>
  </section>
</main>

<footer class="taskbar">
  <button class="weather"><svg width="28" height="32" viewBox="0 0 28 32"><path d="M2 17q-3-5 3-6 3-6 8-3v9z" fill="#a9c8f5"/><path d="M3 23q9 2 14-5l7-2q2 13-8 15-9 1-13-8z" fill="#f39a1f"/><circle cx="20" cy="9" r="8" fill="#c42b1c"/><text x="20" y="13" text-anchor="middle" class="badge">1</text></svg><span>70°F<br><em>Mostly clear</em></span></button>
  <div class="pins">
    <button aria-label="Start"><svg width="24" height="24" viewBox="0 0 24 24" fill="#3cb8f8"><path d="M0 0h11.500v11.500H0z" fill="#6fd3fb"/><path d="M12.500 0H24v11.500H12.500z"/><path d="M0 12.500h11.500V24H0z"/><path d="M12.500 12.500H24V24H12.500z" fill="#14a0f5"/></svg></button>
    <label class="tsearch"><svg width="16" height="16" viewBox="0 0 16 16"><circle cx="7" cy="6.500" r="5.500" fill="none" stroke="#222" stroke-width="1.500"/><path d="m11 10.500 4 4.500" stroke="#222" stroke-width="1.800"/></svg><input type="text" placeholder="Search" aria-label="Search"><svg width="42" height="24" viewBox="0 0 42 24"><path d="m8 18 8-12 6 7 5-8 9 13z" fill="#d5a994"/><path d="m16 6 3 6-5 1zm11-1 4 7-6 0z" fill="#f2ddd2"/><path d="M0 18h42v2q-20 6-42 2z" fill="#2d7a46"/><path d="M12 23q8-4 6-6h8q-4 3 8 6z" fill="#3fb6e8"/><path d="m4 0 3 8 2 8H0l2-8zm8 5 4 14H8zm20 0 3 13h-7zm6-2 4 17H33z" fill="#3f7d3a"/><path d="M4 4v16m34-10v12M12 16v6" stroke="#8a4f2a" stroke-width="1.500"/></svg></label>
    <button aria-label="Task view"><svg width="24" height="24" viewBox="0 0 24 24"><rect y="7" width="17" height="17" rx="1" fill="#666"/><rect x="6" y="0" width="18" height="17" rx="1" fill="#f2f2f2"/><path d="M6 7h11v10H6z" fill="#b9b9b9"/></svg></button>
    <button aria-label="Copilot"><svg width="24" height="24" viewBox="0 0 24 24"><path d="M7 1h8q2 0 3 4h-4q-2 0-3 4l-2 6q-1 3-4 3H3q-4 0-3-5l2-8q1-4 5-4z" fill="#1b9de0"/><path d="M0 14q4 2 7-1l3-8-1 10q-1 3-4 3H3q-3 0-3-4z" fill="#f5c63c"/><path d="M17 23H9q-2 0-3-4h4q2 0 3-4l2-6q1-3 4-3h2q4 0 3 5l-2 8q-1 4-5 4z" fill="#d45be0"/><path d="M9 23q-2 0-3-4h4q2 0 3-3l6 3-3 4z" fill="#f5705e"/><path d="M14 1q3 0 4 4h-4z" fill="#2452c9"/></svg></button>
    <button class="run" aria-label="Browser"><svg width="24" height="24" viewBox="0 0 24 24"><circle cx="12" cy="12" r="12" fill="#1276c8"/><path d="M1 9Q4 0 13 0q10 1 11 10 0 6-7 6-4-1-2-4 0-6-7-6-4 0-7 3z" fill="#37c3d0"/><path d="M17 1q7 4 7 10-1 5-7 5-4-1-2-4z" fill="#5ad463"/><path d="M8 11q-4 8 4 12 5 1 9-4-6 2-9-1-4-3-1-7-2-2-3 0z" fill="#0c3f86"/></svg></button>
    <button aria-label="Chat"><svg width="24" height="24" viewBox="0 0 24 24"><circle cx="12" cy="4" r="4" fill="#7b83eb"/><circle cx="20" cy="5" r="3" fill="#5059c9"/><path d="M6 9h13v9q-2 6-7 6t-6-6z" fill="#7b83eb"/><path d="M18 9h6v8q-1 3-5 3z" fill="#5059c9"/><rect y="6" width="11" height="11" rx="1" fill="#4b53bc"/><path d="M3 9h5.500M5.700 9v6" stroke="#fff" stroke-width="1.500"/></svg></button>
    <button class="run" aria-label="Files"><svg width="24" height="24" viewBox="0 0 24 24"><path d="M0 3q0-2 2-2h6l2 3h12q2 0 2 2v15H0z" fill="#e8a317"/><path d="M0 6h24v16q0 1-1 1H1q-1 0-1-1z" fill="#ffd24d"/><path d="M4 23v-5q0-2 2-2h12q2 0 2 2v5z" fill="#1374cf"/></svg></button>
    <button class="run" aria-label="Loop"><svg width="24" height="24" viewBox="0 0 24 24"><circle cx="12" cy="12" r="9.500" fill="none" stroke="#43b02a" stroke-width="3"/><path d="M5 5q-5 7 0 14" fill="none" stroke="#1d2b1a" stroke-width="2" stroke-dasharray="2 2"/></svg></button>
    <button class="run" aria-label="Terminal"><svg width="24" height="24" viewBox="0 0 24 24"><rect y="2" width="24" height="20" rx="2" fill="#454545"/><path d="M0 5V4q0-2 2-2h20q2 0 2 2v1z" fill="#bbb"/><path d="m4 9 4 4-4 4m7 1h6" fill="none" stroke="#fff" stroke-width="1.800"/></svg></button>
    <button class="run active" aria-label="Instrument"><svg width="24" height="24" viewBox="0 0 24 24"><rect width="24" height="24" rx="2" fill="#b00008"/><rect x="2" y="2" width="20" height="20" fill="none" stroke="#e88" stroke-width="1"/><path d="M8 17 10 7l4 10 2-10" fill="none" stroke="#fff" stroke-width="2.200"/></svg></button>
    <button class="run" aria-label="Board IDE"><svg width="24" height="24" viewBox="0 0 24 24"><rect x="1" width="22" height="24" rx="4" fill="#1d9aa0"/><path d="M12 12q-3-4-5.500-4T3.500 12t3 4 5.500-4q3-4 5.500-4t3 4-3 4-5.500-4z" fill="none" stroke="#d9f3f3" stroke-width="1.800"/></svg></button>
    <button class="run" aria-label="Spreadsheet"><svg width="24" height="24"><use href="#xl"/></svg></button>
  </div>
  <div class="tray">
    <svg width="12" height="12" viewBox="0 0 12 12"><path d="m1 8.500 5-5 5 5" fill="none" stroke="#fff" stroke-width="1.300"/></svg>
    <svg class="net" width="18" height="18" viewBox="0 0 18 18"><path d="M11 2.500H1.500v10H12M5 15.500h6M7 12.500v3M12 1.500h4v5h-4zM14 6.500v7q0 2-3 2" fill="none" stroke="#fff" stroke-width="1.200"/></svg>
    <svg width="18" height="18" viewBox="0 0 18 18"><path d="M1 7v4h3l4 4V3L4 7zM10.500 6q2 3 0 6M12.500 4q4 5 0 10M14.500 2q6 7 0 14" fill="none" stroke="#fff" stroke-width="1.200"/></svg>
    <time>7:41 PM<br>9/25/2024</time>
    <svg width="14" height="16" viewBox="0 0 14 16"><path d="M0 12q2-1 2-6Q3 1 7 1t5 5q0 5 2 6zM5 13.500h4q-2 3-4 0z" fill="#4cc2ff"/></svg>
  </div>
</footer>
<script src="app.js"></script>
</body>
</html>
```
FILE: styles.css
```css
* { box-sizing: border-box; }
body { margin: 0; height: 100vh; overflow: hidden; background: #000; font: 12px/16px "Open Sans", "Noto Sans", sans-serif; color: #222; }
button { border: 0; padding: 0; margin: 0; background: none; font: inherit; color: inherit; display: flex; align-items: center; justify-content: center; }
input, select { border: 0; padding: 0; margin: 0; background: none; font: inherit; color: inherit; outline: 0; min-width: 0; border-radius: 0; }
select { appearance: none; }
a { color: inherit; text-decoration: none; }
svg { flex: none; display: block; overflow: visible; }
p { margin: 0; }
.defs { position: absolute; width: 0; height: 0; }

.desktop { position: relative; height: calc(100vh - 48px); overflow: hidden; }
.icons { width: 152px; display: grid; grid-template-columns: 76px 76px; grid-auto-rows: 99px; padding-top: 9px; }
.shortcut { display: flex; flex-direction: column; align-items: center; gap: 4px; color: #fff; font-size: 12px; text-align: center; }
.shortcut .pic { width: 42px; height: 44px; }
.shortcut span { max-width: 64px; white-space: nowrap; }
.shortcut[href="#acrobat"] { grid-column: 1; }
.shortcut[href="#acrobat"] span { white-space: normal; }
.third { grid-column: 1; }
.biax { position: absolute; left: 1672px; top: 109px; width: 76px; }
.biax span { max-width: none; }

.win { position: absolute; display: flex; flex-direction: column; border-radius: 8px; overflow: hidden; }
.winctl { display: flex; justify-content: flex-end; color: #777; }
.winctl button { width: 46px; height: 32px; }
.winctl svg { width: 12px; height: 12px; }

/* Browser */
.edge { left: 307px; top: 412px; width: 1478px; bottom: 0; background: #f7f7f7; border-radius: 8px 8px 0 0; }
.edge-title { height: 40px; background: #e8e8e8; align-items: center; }
.edge-bar { height: 39px; display: flex; align-items: center; justify-content: flex-end; }
.edge-bar button { width: 44px; height: 32px; }
.edge-bar .pilot { width: 42px; }
.edge-bar svg { width: 20px; height: 20px; }
.edge-bar svg.big { width: 24px; height: 24px; }
.edge-bar .address { flex: 1; margin: 0 6px 0 80px; height: 31px; border: 1px solid #d0d0d0; border-radius: 16px; background: #fff; display: flex; align-items: center; justify-content: flex-end; padding-right: 14px; }
.page { flex: 1; margin: 0 4px; background: #fff; border-radius: 8px 8px 0 0; box-shadow: 0 0 3px rgba(0,0,0,.25); display: flex; flex-direction: column; align-items: center; font-family: "Liberation Sans", sans-serif; font-size: 13px; }
.glinks { align-self: stretch; display: flex; justify-content: flex-end; align-items: center; gap: 15px; height: 62px; padding-right: 14px; }
.glinks button { margin-left: 4px; }
.glinks .gapps { margin-left: 11px; }
.doodle { margin-top: 211px; }
.gsearch { margin: 44px 4px 0 0; width: 588px; height: 48px; border: 1px solid #dfe1e5; border-radius: 24px; display: flex; align-items: center; justify-content: flex-end; gap: 16px; padding-right: 16px; }
.gbtns { margin-top: 29px; display: flex; gap: 12px; }
.gbtns button { height: 36px; padding: 0 16px; background: #f8f9fa; border-radius: 4px; font: 14px/36px Roboto, sans-serif; color: #3c4043; }

/* Spreadsheet */
.excel { left: 42px; top: 67px; width: 1426px; height: 752px; background: #efefef; border: 1px solid #8a8a8a; font-size: 12px; box-shadow: 0 16px 60px rgba(0,0,0,.55); }
.xl-title { height: 49px; display: flex; align-items: center; color: #b4b4b4; padding-left: 16px; font-size: 11px; }
.autosave { margin-left: 16px; width: 55px; }
.toggle { width: 45px; height: 20px; border: 1px solid #b4b4b4; border-radius: 10px; background: #fff; display: flex; align-items: center; gap: 5px; padding-left: 2px; }
.toggle input { position: absolute; opacity: 0; }
.toggle i { width: 14px; height: 14px; border-radius: 50%; background: #bbb; }
.qa { margin-left: 12px; gap: 4px; }
.qa + .qa { margin-left: 12px; }
.doc { margin-left: 24px; width: 134px; white-space: nowrap; }
.saved { width: 98px; white-space: nowrap; }
.xl-search { margin-left: 32px; width: 369px; height: 33px; border: 1px solid #d2d2d2; border-radius: 4px; display: flex; align-items: center; gap: 13px; padding-left: 21px; box-shadow: 0 1px 2px rgba(0,0,0,.15); font-size: 12px; }
::placeholder { color: inherit; opacity: 1; }
.user { margin-left: auto; display: flex; align-items: center; white-space: nowrap; }
.user span { margin: 0 9px 0 12px; }
.user svg { margin-right: 7px; }
.user b { width: 24px; height: 24px; border-radius: 50%; background: #004e8c; color: #fff; font-weight: 400; text-align: center; line-height: 24px; }
.excel .winctl { margin-left: 12px; color: #b4b4b4; }
.excel .winctl button { width: 48px; }
.tabs { height: 29px; display: flex; align-items: center; padding: 0 12px 0 22px; font-size: 12px; }
.tabs a { margin-right: 23px; line-height: 18px; padding-top: 2px; border-bottom: 2px solid transparent; white-space: nowrap; }
.tabs a:first-child { margin-right: 26px; }
.tabs a.on { font-weight: 600; border-color: #107c41; }
.comments { margin-left: auto; height: 24px; width: 90px; gap: 5px; background: #fff; border: 1px solid #777; border-radius: 4px; }
.share { margin-left: 8px; height: 24px; width: 71px; gap: 5px; background: #107c41; color: #fff; border-radius: 4px; }
.ribbon { height: 100px; margin: 0 8px; padding: 5px 0 6px; background: #fff; border-radius: 8px; box-shadow: 0 2px 3px rgba(0,0,0,.2); display: flex; font-size: 11px; line-height: 16px; }
.grp { border-right: 1px solid #d0d0d0; flex: none; padding-top: 7px; }
.row { display: flex; align-items: center; height: 24px; margin-bottom: 7px; }
.row .t { width: 25px; height: 24px; flex: none; font-size: 13px; color: #333; }
.row .c { width: 12px; height: 24px; }
.row .c svg { width: 8px; height: 8px; }
.vr { width: 1px; height: 24px; background: #ccc; margin: 0 3px; flex: none; }
.vr.tall { height: 62px; }
.it { font-style: italic; font-family: "Liberation Serif", serif; }
.gap4 { margin-left: 4px; }
.pick { display: flex; align-items: center; height: 24px; border: 1px solid #888; border-radius: 4px; padding: 0 3px; }
.pick select { flex: 1; }
.font-name { width: 122px; margin-right: 3px; }
.font-size { width: 42px; margin-right: 3px; }
.row .a-up { font-size: 17px; }
.row .a-dn { font-size: 15px; margin-left: 2px; }
.a-up svg, .a-dn svg { align-self: flex-start; margin-top: 4px; }
.g-clip { width: 104px; display: flex; padding-top: 2px; }
.paste { margin-left: 13px; width: 40px; }
.stack { display: flex; flex-direction: column; gap: 2px; }
.stack button { height: 24px; width: 32px; justify-content: flex-start; }
.g-clip .stack { margin-left: 7px; }
.g-clip .side-chev { margin-left: 5px; }
.side-chev { margin-left: 7px; }
.big-btn { flex-direction: column; justify-content: flex-start; white-space: nowrap; line-height: 16px; }
.big-btn > svg:first-child { margin-bottom: 4px; }
.big-btn > span { display: flex; align-items: center; gap: 3px; }
.big-btn > .only { height: 16px; }
.g-font { width: 236px; padding-left: 8px; }
.g-align { width: 198px; padding-left: 7px; }
.g-align .cols { display: flex; }
.g-align .row .t { width: 26px; }
.g-align .row .boxed { border: 1px solid #777; background: #ebebeb; border-radius: 4px; }
.g-align .tall { margin: 0 6px 0 5px; }
.row .wrap { font-size: 11px; line-height: 9px; display: block; text-align: left; padding-left: 6px; }
.wrap svg { display: inline-block; }
.g-num { width: 161px; padding-left: 6px; }
.num-fmt { width: 146px; margin-left: 2px; }
.row .sym { font-size: 18px; }
.gapc { margin: 0 2px; }
.row .dec { flex-direction: column; align-items: flex-end; font-size: 9px; line-height: 10px; padding-right: 4px; }
.dec span { display: flex; align-items: center; }
.g-styles { width: 198px; display: flex; padding-left: 7px; padding-top: 5px; }
.w76 { width: 76px; } .w60 { width: 60px; } .w48 { width: 48px; }
.w46 { width: 46px; } .w74 { width: 74px; } .w63 { width: 63px; } .w62 { width: 62px; }
.g-cells { width: 98px; padding: 0 0 0 12px; }
.line { height: 26px; gap: 5px; width: 70px; justify-content: flex-start; }
.line span { flex: 1; text-align: left; }
.g-edit { width: 149px; display: flex; flex-direction: column; padding: 0 0 0 12px; }
.acts { display: flex; }
.g-edit .stack { width: 34px; margin-right: 2px; }
.g-edit .big-btn, .g-one .big-btn { padding-top: 4px; }
.grp p { margin-top: auto; text-align: center; line-height: 10px; }
.g-edit p { padding-right: 12px; }
.g-one { display: flex; flex-direction: column; padding-top: 0; }
.g-one .big-btn { align-self: center; }
.off { color: #b8b8b8; }
.collapse { margin: auto 8px 2px auto; align-self: flex-end; }
.formula { margin: 8px 8px 0; height: 25px; background: #fff; border: 1px solid #d0d0d0; border-radius: 4px; display: flex; align-items: center; justify-content: flex-end; padding-right: 3px; }
.sheet { height: 478px; margin-top: 8px; display: flex; justify-content: flex-end; overflow: hidden; }
table { border-spacing: 0; table-layout: fixed; width: 417px; height: 20px; font: 13px/17px Roboto, sans-serif; color: #000; align-self: flex-start; }
th, td { height: 20px; width: 64px; padding: 2px 3px 0; overflow: hidden; white-space: nowrap; border-right: 1px solid #dcdcdc; border-bottom: 1px solid #dcdcdc; text-align: right; background: #fff; }
th { font-weight: 400; text-align: center; background: #efefef; color: #444; border-bottom-color: #999; padding-top: 0; font-family: "Open Sans", sans-serif; font-size: 12px; }
.last { width: 33px; padding: 0 0 0 26px; }
td.h { text-align: left; padding: 2px 0 0 2px; }
.vscroll { width: 20px; margin-left: 1px; display: flex; flex-direction: column; align-items: center; padding: 5px 0 2px; background: #f4f4f4; }
.up, .down { border: 5px solid transparent; border-top: 0; border-bottom: 8px solid #707070; }
.down { border-bottom: 0; border-top: 8px solid #707070; margin-top: auto; }
.thumb { width: 9px; height: 18px; border-radius: 5px; background: #707070; margin-top: 4px; }
.hscroll { height: 30px; display: flex; align-items: center; padding-right: 24px; }
.hscroll .bar { flex: 1; margin: 0 78px 0 300px; height: 9px; border-radius: 5px; background: #707070; }
.hscroll .right { border: 5px solid transparent; border-right: 0; border-left: 7px solid #707070; }
.status { flex: 1; background: #f4f4f4; border-top: 1px solid #fff; display: flex; align-items: center; justify-content: flex-end; padding-right: 18px; }
.status button { width: 40px; height: 21px; }
.status .on { background: #dedede; }
.status .pm { width: 16px; text-align: center; font-size: 16px; }
.status input { appearance: none; width: 102px; height: 12px; background: linear-gradient(#666, #666) center / 100% 1px no-repeat; margin: 0 1px 0 2px; }
.status input::-webkit-slider-thumb { appearance: none; width: 5px; height: 11px; background: #555; }
.status .pct { font: 11px/16px "Liberation Sans", sans-serif; width: 36px; text-align: right; }

/* Instrument control */
.app { left: -195px; top: 230px; width: 1283px; height: 793px; background: #fff; border: 1px solid #999; border-right-width: 0; font: 13px/16px "Liberation Sans", Arial, sans-serif; color: #555; box-shadow: 0 16px 40px rgba(0,0,0,.5); }
.app-title { height: 31px; flex: none; background: #f3f3f3; color: #000; }
.app-title button { height: 30px; }
.app-title .dis { color: #bbb; }
.steps { display: flex; height: 46px; flex: none; border-bottom: 1px solid #555; }
.steps a { width: 285px; margin-right: -11px; flex: none; background: #a50000; color: #fff; font-weight: 700; display: flex; align-items: center; justify-content: center; padding-right: 5px; clip-path: polygon(0 0, calc(100% - 23px) 0, 100% 50%, calc(100% - 23px) 100%, 0 100%, 22px 50%); }
.steps .first { clip-path: polygon(0 0, calc(100% - 23px) 0, 100% 50%, calc(100% - 23px) 100%, 0 100%); }
.steps .now { background: #333; }
.steps .end { padding: 0 0 0 9px; margin-right: 0; clip-path: polygon(0 0, 100% 0, 100% 100%, 0 100%, 22px 50%); }
.sys { display: flex; gap: 4px; padding: 5px 0 0 8px; }
.dk { width: 36px; height: 36px; flex: none; background: #636363; color: #fff; }
.sys .wide { width: 39px; }
.app-body { flex: 1; display: flex; min-height: 0; }
.work { flex: 1; min-width: 0; display: flex; flex-direction: column; }
.tools { height: 93px; flex: none; display: flex; flex-direction: column; padding: 4px 7px 0 0; }
.mbtn { align-self: flex-end; width: 32px; height: 30px; background: #e8494f; border: 2px solid #777; color: #fff; font-weight: 700; }
.ctl { display: flex; align-items: center; justify-content: flex-end; margin-top: 3px; height: 36px; }
.spec { display: flex; height: 36px; margin-right: 5px; }
.spec .num { width: 44px; border: 1px solid #ddd; padding-left: 6px; font-size: 20px; color: #777; }
.spec .name { width: 165px; border: 1px solid #ddd; border-left: 0; padding: 0 0 4px 30px; background: linear-gradient(#efefef, #efefef) right 15px / 13px 12px no-repeat; }
.spec button { width: 34px; border: 1px solid #eee; border-left: 0; }
.combo { display: flex; align-items: center; background: #fff; height: 28px; font-size: 16px; }
.combo select { flex: 1; padding: 1px 0 0 4px; align-self: stretch; }
.combo svg { width: 16px; height: 12px; margin: 0 7px; }
.all { width: 153px; height: 30px; margin: 0 4px 0 44px; border: 1px solid #ddd; }
.set { display: flex; gap: 3px; }
.second { margin-left: 42px; }
.z { font-size: 22px; gap: 1px; }
.flip { transform: rotate(180deg); }
.stage { flex: 1; border: 1px solid #ddd; border-width: 1px 1px 0 0; padding: 10px 6px 0 0; display: flex; flex-direction: column; min-height: 0; }
.panel { height: 161px; flex: none; background: #e3e3e3; display: flex; justify-content: flex-end; gap: 14px; padding: 9px 7px 0 0; }
.read { width: 195px; display: flex; flex-direction: column; gap: 3px; flex: none; }
.read output { background: #fff; white-space: nowrap; overflow: hidden; display: block; }
.bigv { height: 48px; font-size: 32px; line-height: 48px; border: solid #fff; border-width: 0 5px 0 6px; }
.low { display: grid; grid-template: 28px 28px / 142px 50px; gap: 3px; font-size: 16px; line-height: 30px; }
.low output { border: solid #fff; border-width: 0 3px 0 4px; }
.low .dk { width: 50px; height: 58px; grid-row: 1 / 3; grid-column: 2; font-size: 24px; padding-top: 2px; }
.expand { width: 25px; height: 25px; background: #fff; margin-left: -7px; }
.redbar { height: 45px; flex: none; background: #a50000; display: flex; align-items: center; color: #fff; padding: 0 6px 0 201px; }
.spin { width: 151px; height: 31px; background: #fafafa; margin-left: 6px; display: flex; align-items: center; gap: 14px; padding-left: 8px; color: #555; }
.spin input { flex: 1; }
.plus { margin-left: 14px; }
.gtools { margin-left: auto; width: 409px; height: 45px; display: grid; grid-template-columns: repeat(9, 1fr); }
.gtools button { height: 45px; }
.gtools .sel { background: #730000; }
.chart { margin-right: -6px; height: 377px; flex: none; border-bottom: 1px solid #ddd; padding-top: 29px; font-size: 13px; }
.side { width: 134px; flex: none; display: flex; flex-direction: column; padding: 8px 8px 14px 6px; }
.conn { display: flex; align-items: center; justify-content: flex-end; gap: 9px; color: #777; height: 24px; padding-right: 2px; }
.conn i { width: 24px; height: 24px; border-radius: 50%; background: #a50000; border: 2px solid #ccc; }
.pair { display: flex; justify-content: space-between; }
.pair button { width: 55px; height: 50px; }
.pair.flags { margin: 6px 0 19px; }
.pair.flags button { height: 36px; background: #92ba62; border: 2px solid #666; color: #fff; font-weight: 700; font-size: 13px; }
.lt { background: #c0c0c0; }
.play { height: 50px; }
.p1 { margin-top: 5px; }
.p2 { margin-top: 61px; }
.side .home { width: 120px; height: 50px; margin: 11px 0 6px; }
.side .jog { width: 120px; height: 105px; }
.pair.last { width: auto; margin-top: auto; justify-content: flex-end; gap: 5px; }
.pair.last button { width: 36px; height: 36px; }

/* Taskbar */
.taskbar { height: 48px; display: flex; align-items: center; justify-content: space-between; background: linear-gradient(90deg, #1f1f1f, #2a2a2a 40%, #242424); border-top: 1px solid #484848; color: #fff; font-size: 12px; padding: 0 21px 2px 18px; }
.weather { width: 300px; gap: 4px; justify-content: flex-start; text-align: left; }
.weather em { font-style: normal; color: #ccc; }
.badge { font-size: 11px; fill: #fff; }
.pins { display: flex; align-items: center; margin-left: 4px; }
.pins button { width: 40px; height: 40px; margin: 0 2px; border-radius: 4px; position: relative; }
.pins .active { background: #3a3a3a; }
.run::after { content: ""; position: absolute; left: 17px; bottom: 0; width: 6px; height: 3px; border-radius: 2px; background: #9a9a9a; }
.active::after { left: 12px; width: 16px; background: #4cc2ff; }
.tsearch { width: 218px; height: 30px; margin: 0 4px; border-radius: 15px; background: #f2f2f2; color: #555; display: flex; align-items: center; gap: 10px; padding: 0 6px 0 11px; }
.tsearch input { flex: 1; }
.tray { width: 300px; display: flex; align-items: center; justify-content: flex-end; }
.net { margin: 0 6px 0 17px; }
.tray time { text-align: right; margin: 0 8px 0 15px; }
```
FILE: app.js
```js
// Sheet rows: columns P to U
const head = ["Ch:Position_X", "Ch:Position_Y", "Ch:Position_Z", "Ch:Load2", "Ch:Load3", "Set Point_X", "Set Point_Y"];
const rows = `0.000883 -0.00051 -0.00762 0.022067
0.001514 0 -0.00483 0.022557
0.002651 -0.00038 -0.01245 0.030508
0.001641 -0.00038 -0.01499 0.023796
0.000757 -0.00013 -0.0122 0.020656
0.001767 -0.00013 -0.01144 0.025063
0.002398 -0.00025 -0.01525 0.028664
0.00101 -0.00038 -0.01448 0.02296
0.00101 -0.00013 -0.00661 0.022557
0.002398 -0.00013 -0.00407 0.027166
0.002145 -0.00038 -0.01093 0.027483
0.000757 -0.00038 -0.00737 0.021894
0.001641 -0.00013 -0.01194 0.023219
0.002145 -0.00013 -0.01169 0.028693
0.00202 -0.00025 -0.00788 0.023796
0.003029 -0.00038 -0.0033 0.024257
0.007954 -0.00025 -0.00559 0.028895
0.015781 -0.00013 -0.00712 0.038056
0.027398 -0.00038 -0.0033 0.058596
0.043558 -0.00038 -0.00864 0.089162
0.065401 -0.00013 -0.01372 0.145626
0.093052 -0.00013 -0.01042 0.254752`.split("\n");
const pCol = i => ([10, 18, 19].includes(i) ? "0.000126" : "0");
document.getElementById("cells").innerHTML =
  "<tr>" + head.map(h => `<td class="h">${h}</td>`).join("") + "</tr>" +
  rows.map((r, i) => "<tr>" + [pCol(i), ...r.split(" "), "0", ""].map(v => `<td>${v}</td>`).join("") + "</tr>").join("");

// Graph grid: 0.05 per major division, ten minor divisions each
const X0 = 202, STEP = 67.2, W = 1009, H = 300;
let minor = "", major = "", ticks = "", labels = "";
for (let i = -30; i <= 120; i++) {
  const x = Math.round(X0 + i * STEP / 10) + 0.5;
  if (i % 10) minor += `M${x} 0V${H}`;
  else {
    major += `M${x} 0V${H}`;
    ticks += `M${x} ${H + 2}v5`;
    labels += `<text x="${x}" y="${H + 20}" text-anchor="middle" fill="#777">${+(0.2 + i / 200).toFixed(2)}</text>`;
  }
}
for (let y = 0; y < H; y += 5) {
  const p = `M0 ${y + 0.5}H${W}`;
  if (y % 25) minor += p; else major += p;
}
document.getElementById("chart").innerHTML =
  `<path d="${minor}" stroke="#f1f1f1"/><path d="${major}" stroke="#dedede"/><path d="${ticks}" stroke="#777"/>${labels}`;
```
